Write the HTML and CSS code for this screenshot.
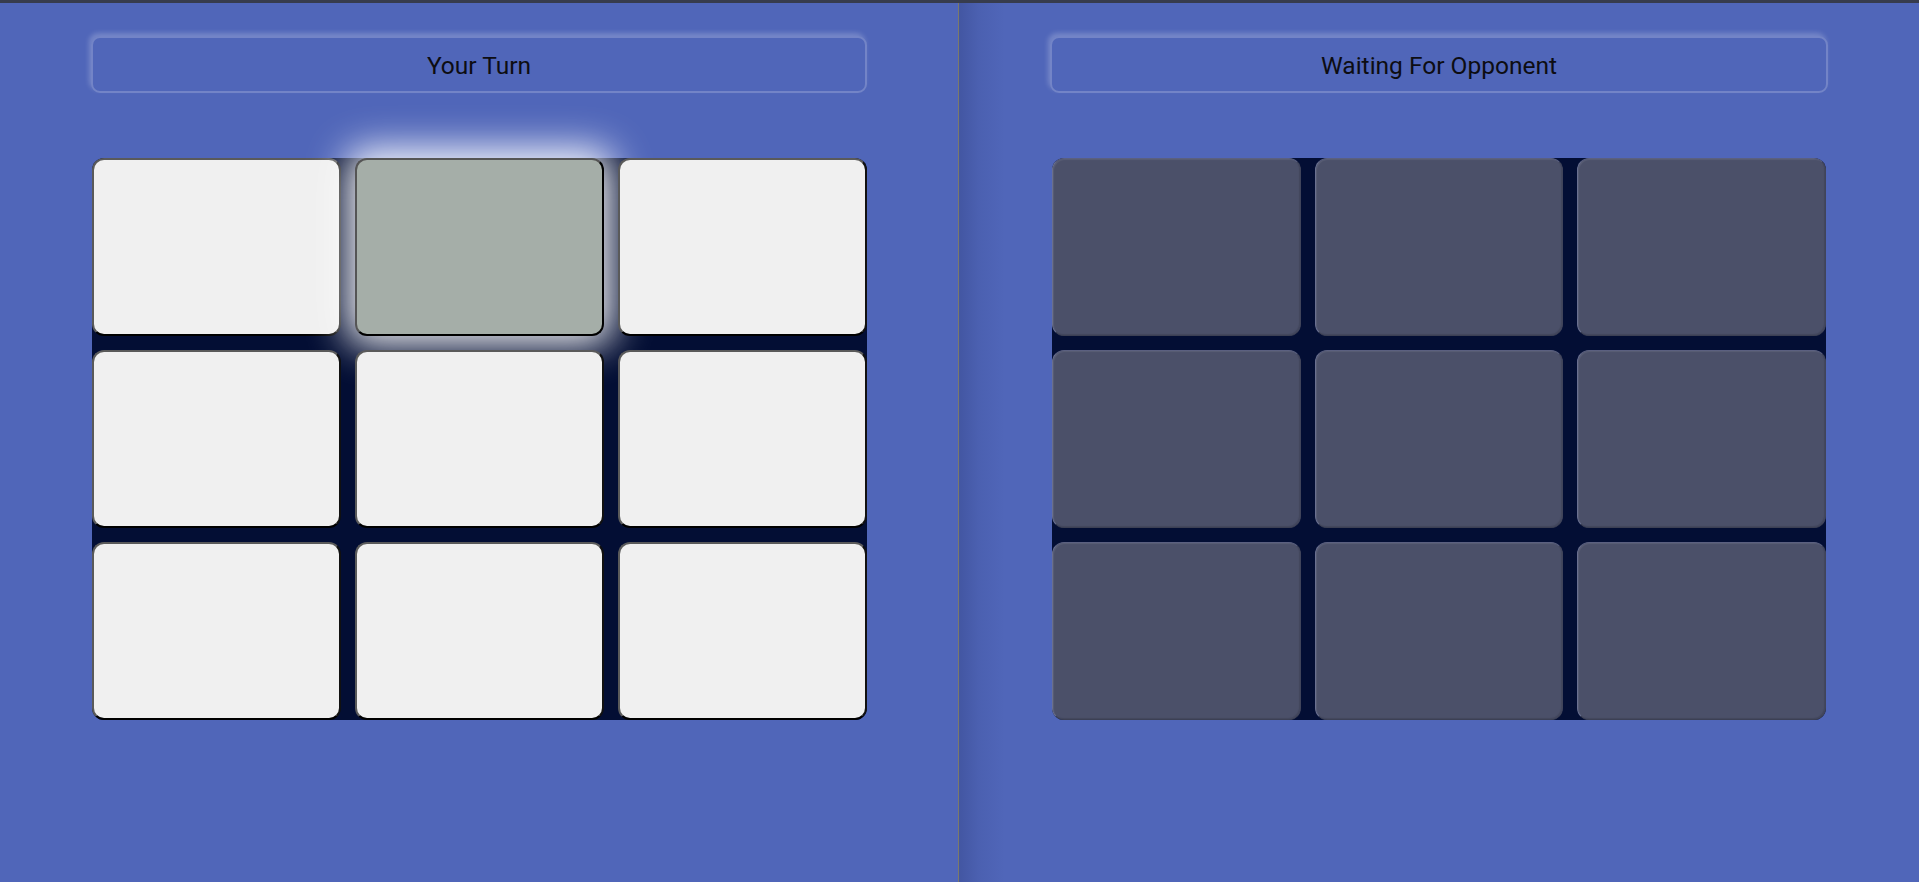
FILE: index.html
```html
<!DOCTYPE html>
<html lang="en">
<head>
<meta charset="utf-8">
<title>Tic Tac Toe</title>
<link rel="stylesheet" href="styles.css">
</head>
<body>
<div class="topbar"></div>
<main class="panels">
  <section class="panel">
    <div class="status">Your Turn</div>
    <div class="board">
      <div class="cell"></div>
      <div class="cell cell-hover"></div>
      <div class="cell"></div>
      <div class="cell"></div>
      <div class="cell"></div>
      <div class="cell"></div>
      <div class="cell"></div>
      <div class="cell"></div>
      <div class="cell"></div>
    </div>
  </section>
  <div class="divider"></div>
  <section class="panel panel-right">
    <div class="status status-wide">Waiting For Opponent</div>
    <div class="board board-narrow">
      <div class="cell cell-disabled"></div>
      <div class="cell cell-disabled"></div>
      <div class="cell cell-disabled"></div>
      <div class="cell cell-disabled"></div>
      <div class="cell cell-disabled"></div>
      <div class="cell cell-disabled"></div>
      <div class="cell cell-disabled"></div>
      <div class="cell cell-disabled"></div>
      <div class="cell cell-disabled"></div>
    </div>
  </section>
</main>
</body>
</html>
```
FILE: styles.css
```css
* { box-sizing: border-box; }
html, body { margin: 0; height: 100%; }
body {
  background: #5066b9;
  font-family: Roboto, "Liberation Sans", sans-serif;
  overflow: hidden;
}
.topbar {
  height: 3px;
  background: #373c4d;
}
.panels {
  display: flex;
  height: calc(100vh - 3px);
}
.panel {
  width: 958px;
  display: flex;
  flex-direction: column;
  align-items: center;
  padding-top: 33px;
}
.panel-right {
  flex: 1;
  width: auto;
  background: linear-gradient(90deg, rgba(20, 30, 80, 0.22) 0, rgba(20, 30, 80, 0.08) 20px, rgba(20, 30, 80, 0) 46px);
}
.divider {
  width: 1px;
  background: #7b7a6c;
}
.status {
  width: 776px;
  height: 57px;
  border: 2px solid rgba(255, 255, 255, 0.2);
  border-radius: 9px;
  box-shadow: -2px -3px 5px rgba(255, 255, 255, 0.22);
  display: flex;
  align-items: center;
  justify-content: center;
  font-size: 24.5px;
  color: #0d0d12;
  padding-top: 2px;
}
.status-wide { width: 778px; }
.board {
  margin-top: 65px;
  width: 775px;
  height: 562px;
  display: grid;
  grid-template-columns: repeat(3, 1fr);
  grid-template-rows: repeat(3, 1fr);
  gap: 14px;
  background: #030e34;
  border-radius: 12px;
}
.board-narrow { width: 774px; }
.cell {
  background: #f0f0f0;
  border-radius: 12px;
  border: 2px solid;
  border-color: #5a5a5a #111 #000 #5a5a5a;
}
.cell-hover {
  background: #a5aea8;
  border-color: #555 #000 #000 #555;
  box-shadow: 0 0 38px 10px rgba(255, 255, 255, 0.95);
}
.cell-disabled {
  background: #4b5069;
  border: 1px solid;
  border-color: #5b6080 #40445a #3c4054 #6a7090;
  box-shadow: inset 1px 1px 1px rgba(255, 255, 255, 0.08), inset -1px -1px 1px rgba(0, 0, 0, 0.12);
}
```
